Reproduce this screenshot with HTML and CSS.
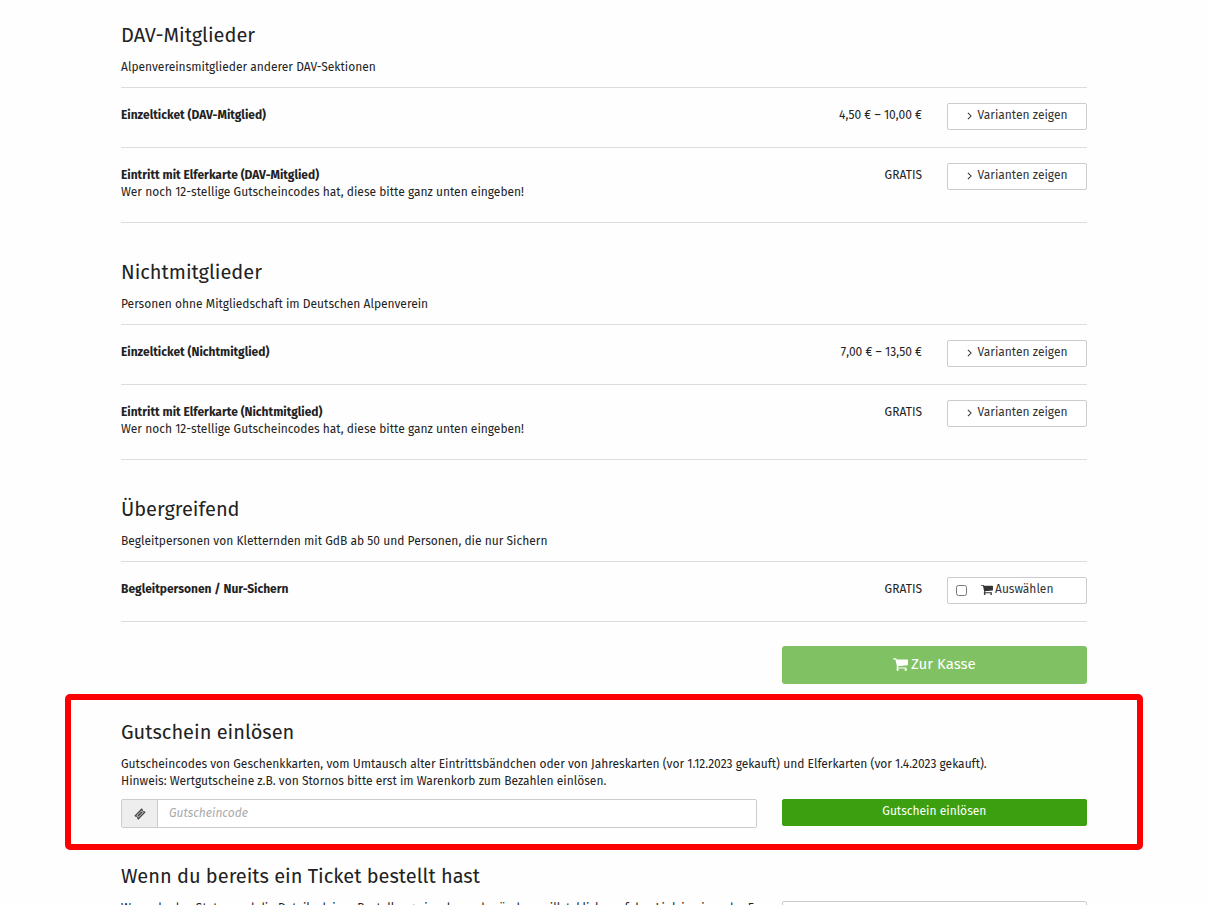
FILE: index.html
```html
<!DOCTYPE html>
<html lang="de">
<head>
  <meta charset="UTF-8">
  <meta name="viewport" content="width=device-width, initial-scale=1.0">
  <title>Tickets</title>
  <link rel="stylesheet" href="styles.css">
</head>
<body>
  <svg class="sprite" aria-hidden="true">
    <symbol id="cart" viewBox="0 0 1664 1536">
      <path d="M640 1408q0 52-38 90t-90 38-90-38-38-90 38-90 90-38 90 38 38 90zm896 0q0 52-38 90t-90 38-90-38-38-90 38-90 90-38 90 38 38 90zm128-1088v512q0 24-16.500 42.500t-40.500 21.500l-1044 122q13 60 13 70 0 16-24 64h920q26 0 45 19t19 45-19 45-45 19h-1024q-26 0-45-19t-19-45q0-11 8-31.500t16-36 21.500-40 15.500-29.500l-177-823h-204q-26 0-45-19t-19-45 19-45 45-19h256q16 0 28.500 6.500t19.500 15.500 13 24.500 8 26 5.500 29.500 4.500 26h1201q26 0 45 19t19 45z"/>
    </symbol>
    <symbol id="angle" viewBox="0 0 6 10">
      <path d="M1 1l4 4-4 4" fill="none" stroke="currentColor" stroke-width="1.300"/>
    </symbol>
    <symbol id="ticket" viewBox="0 0 14 14">
      <path fill-rule="evenodd" d="M9 .4l1.300 1.300a1.500 1.500 0 0 0 2 2L13.600 5 5 13.600l-1.300-1.300a1.500 1.500 0 0 0-2-2L.4 9zM8.800 2.800L2.800 8.800l2.400 2.400 6-6z"/>
      <path d="M8.800 3.900l1.300 1.300-4.900 4.900-1.300-1.300z"/>
    </symbol>
  </svg>

  <main class="container">
    <section class="category">
      <h2>DAV-Mitglieder</h2>
      <p>Alpenvereinsmitglieder anderer DAV-Sektionen</p>
      <div class="items">
        <article class="item">
          <div class="info"><strong>Einzelticket (DAV-Mitglied)</strong></div>
          <div class="price">4,50 € – 10,00 €</div>
          <button type="button" class="btn"><svg class="angle"><use href="#angle"/></svg>Varianten zeigen</button>
        </article>
        <article class="item">
          <div class="info">
            <strong>Eintritt mit Elferkarte (DAV-Mitglied)</strong>
            <p class="description">Wer noch 12-stellige Gutscheincodes hat, diese bitte ganz unten eingeben!</p>
          </div>
          <div class="price">GRATIS</div>
          <button type="button" class="btn"><svg class="angle"><use href="#angle"/></svg>Varianten zeigen</button>
        </article>
      </div>
    </section>

    <section class="category">
      <h2>Nichtmitglieder</h2>
      <p>Personen ohne Mitgliedschaft im Deutschen Alpenverein</p>
      <div class="items">
        <article class="item">
          <div class="info"><strong>Einzelticket (Nichtmitglied)</strong></div>
          <div class="price">7,00 € – 13,50 €</div>
          <button type="button" class="btn"><svg class="angle"><use href="#angle"/></svg>Varianten zeigen</button>
        </article>
        <article class="item">
          <div class="info">
            <strong>Eintritt mit Elferkarte (Nichtmitglied)</strong>
            <p class="description">Wer noch 12-stellige Gutscheincodes hat, diese bitte ganz unten eingeben!</p>
          </div>
          <div class="price">GRATIS</div>
          <button type="button" class="btn"><svg class="angle"><use href="#angle"/></svg>Varianten zeigen</button>
        </article>
      </div>
    </section>

    <section class="category">
      <h2>Übergreifend</h2>
      <p>Begleitpersonen von Kletternden mit GdB ab 50 und Personen, die nur Sichern</p>
      <div class="items">
        <article class="item">
          <div class="info"><strong>Begleitpersonen / Nur-Sichern</strong></div>
          <div class="price">GRATIS</div>
          <label class="btn btn-check">
            <input type="checkbox" name="item">
            <svg class="cart"><use href="#cart"/></svg>Auswählen
          </label>
        </article>
      </div>
    </section>

    <div class="row checkout">
      <button type="submit" class="btn btn-checkout side"><svg class="cart"><use href="#cart"/></svg>Zur Kasse</button>
    </div>

    <section class="voucher">
      <h2>Gutschein einlösen</h2>
      <p>Gutscheincodes von Geschenkkarten, vom Umtausch alter Eintrittsbändchen oder von Jahreskarten (vor 1.12.2023 gekauft) und Elferkarten (vor 1.4.2023 gekauft).<br>
      Hinweis: Wertgutscheine z.B. von Stornos bitte erst im Warenkorb zum Bezahlen einlösen.</p>
      <form class="row">
        <div class="input-group">
          <label for="voucher"><svg class="ticket"><use href="#ticket"/></svg></label>
          <input type="text" id="voucher" name="voucher" placeholder="Gutscheincode" aria-label="Gutscheincode">
        </div>
        <button type="button" class="btn btn-primary side">Gutschein einlösen</button>
      </form>
    </section>

    <section class="resend">
      <h2>Wenn du bereits ein Ticket bestellt hast</h2>
      <div class="row">
        <p>Wenn du den Status und die Details deiner Bestellung einsehen oder ändern willst, klicke auf den Link in einer der E-Mails, die wir dir gesendet haben.</p>
        <a href="#" class="btn side" aria-label="Link erneut senden"></a>
      </div>
    </section>
  </main>
</body>
</html>
```

FILE: styles.css
```css
* {
  box-sizing: border-box;
}

body {
  margin: 0;
  height: 100vh;
  overflow: hidden;
  background: #fefefe;
  color: #222;
  font-family: "Fira Sans", Roboto, sans-serif;
  font-size: 12px;
  line-height: 17px;
}

h2 {
  margin: 0 0 12px;
  font-size: 20px;
  font-weight: 400;
  line-height: 24px;
}

p {
  margin: 0;
}

svg {
  fill: currentColor;
}

.sprite {
  display: none;
}

.container {
  padding: 23px 120px 0 121px;
}

.category {
  margin-bottom: 37px;
}

.items {
  margin-top: 11px;
  border-bottom: 1px solid #ddd;
}

.item {
  display: grid;
  grid-template-columns: 1fr auto 140px;
  column-gap: 25px;
  align-items: start;
  padding: 15px 0 17px;
  border-top: 1px solid #ddd;
}

.info,
.price {
  padding-top: 4px;
}

.description {
  margin-bottom: 4px;
}

.btn {
  display: flex;
  align-items: center;
  justify-content: center;
  height: 27px;
  padding: 0 12px 3px;
  border: 1px solid #ccc;
  border-radius: 2px;
  background: #fff;
  color: #333;
  font: inherit;
  text-decoration: none;
  cursor: pointer;
}

.angle {
  width: 5px;
  height: 8px;
  margin: 2px 6px 0 0;
}

.cart {
  width: 12px;
  height: 11px;
  margin-right: 2px;
}

.btn-check {
  justify-content: flex-start;
  padding-left: 8px;
}

.btn-check input {
  width: 11px;
  height: 11px;
  margin: 3px 14px 0 0;
}

.row {
  display: grid;
  grid-template-columns: repeat(12, 1fr);
  column-gap: 25px;
  align-items: start;
}

.row > * {
  grid-column: span 8;
}

.row > .side {
  grid-column: 9 / span 4;
}

.checkout {
  margin-top: -13px;
}

.btn-checkout {
  height: 38px;
  padding-bottom: 2px;
  border: 0;
  border-radius: 3px;
  background: #80c163;
  color: #fff;
  font-size: 15px;
}

.btn-checkout .cart {
  width: 15px;
  height: 14px;
  margin-right: 3px;
}

.btn-primary {
  border-color: #3b9f10;
  background: #3b9f10;
  color: #fff;
}

.voucher {
  margin: 10px -56px 14px;
  padding: 20px 50px 16px;
  border: 6px solid #fb0000;
  border-radius: 5px;
}

.voucher .row {
  margin-top: 9px;
}

.input-group {
  display: flex;
  height: 29px;
  border: 1px solid #ccc;
  border-radius: 2px;
}

.input-group label {
  display: flex;
  align-items: center;
  justify-content: center;
  width: 36px;
  border-right: 1px solid #ccc;
  background: #eee;
  color: #444;
}

.ticket {
  width: 12px;
  height: 12px;
}

.input-group input {
  flex: 1;
  min-width: 0;
  padding: 0 11px;
  border: 0;
  background: #fff;
  font: inherit;
}

.input-group input::placeholder {
  color: #aaa;
  font-style: italic;
}

.resend p {
  margin-right: -8px;
}

.resend .btn {
  margin-top: 1px;
}
```
